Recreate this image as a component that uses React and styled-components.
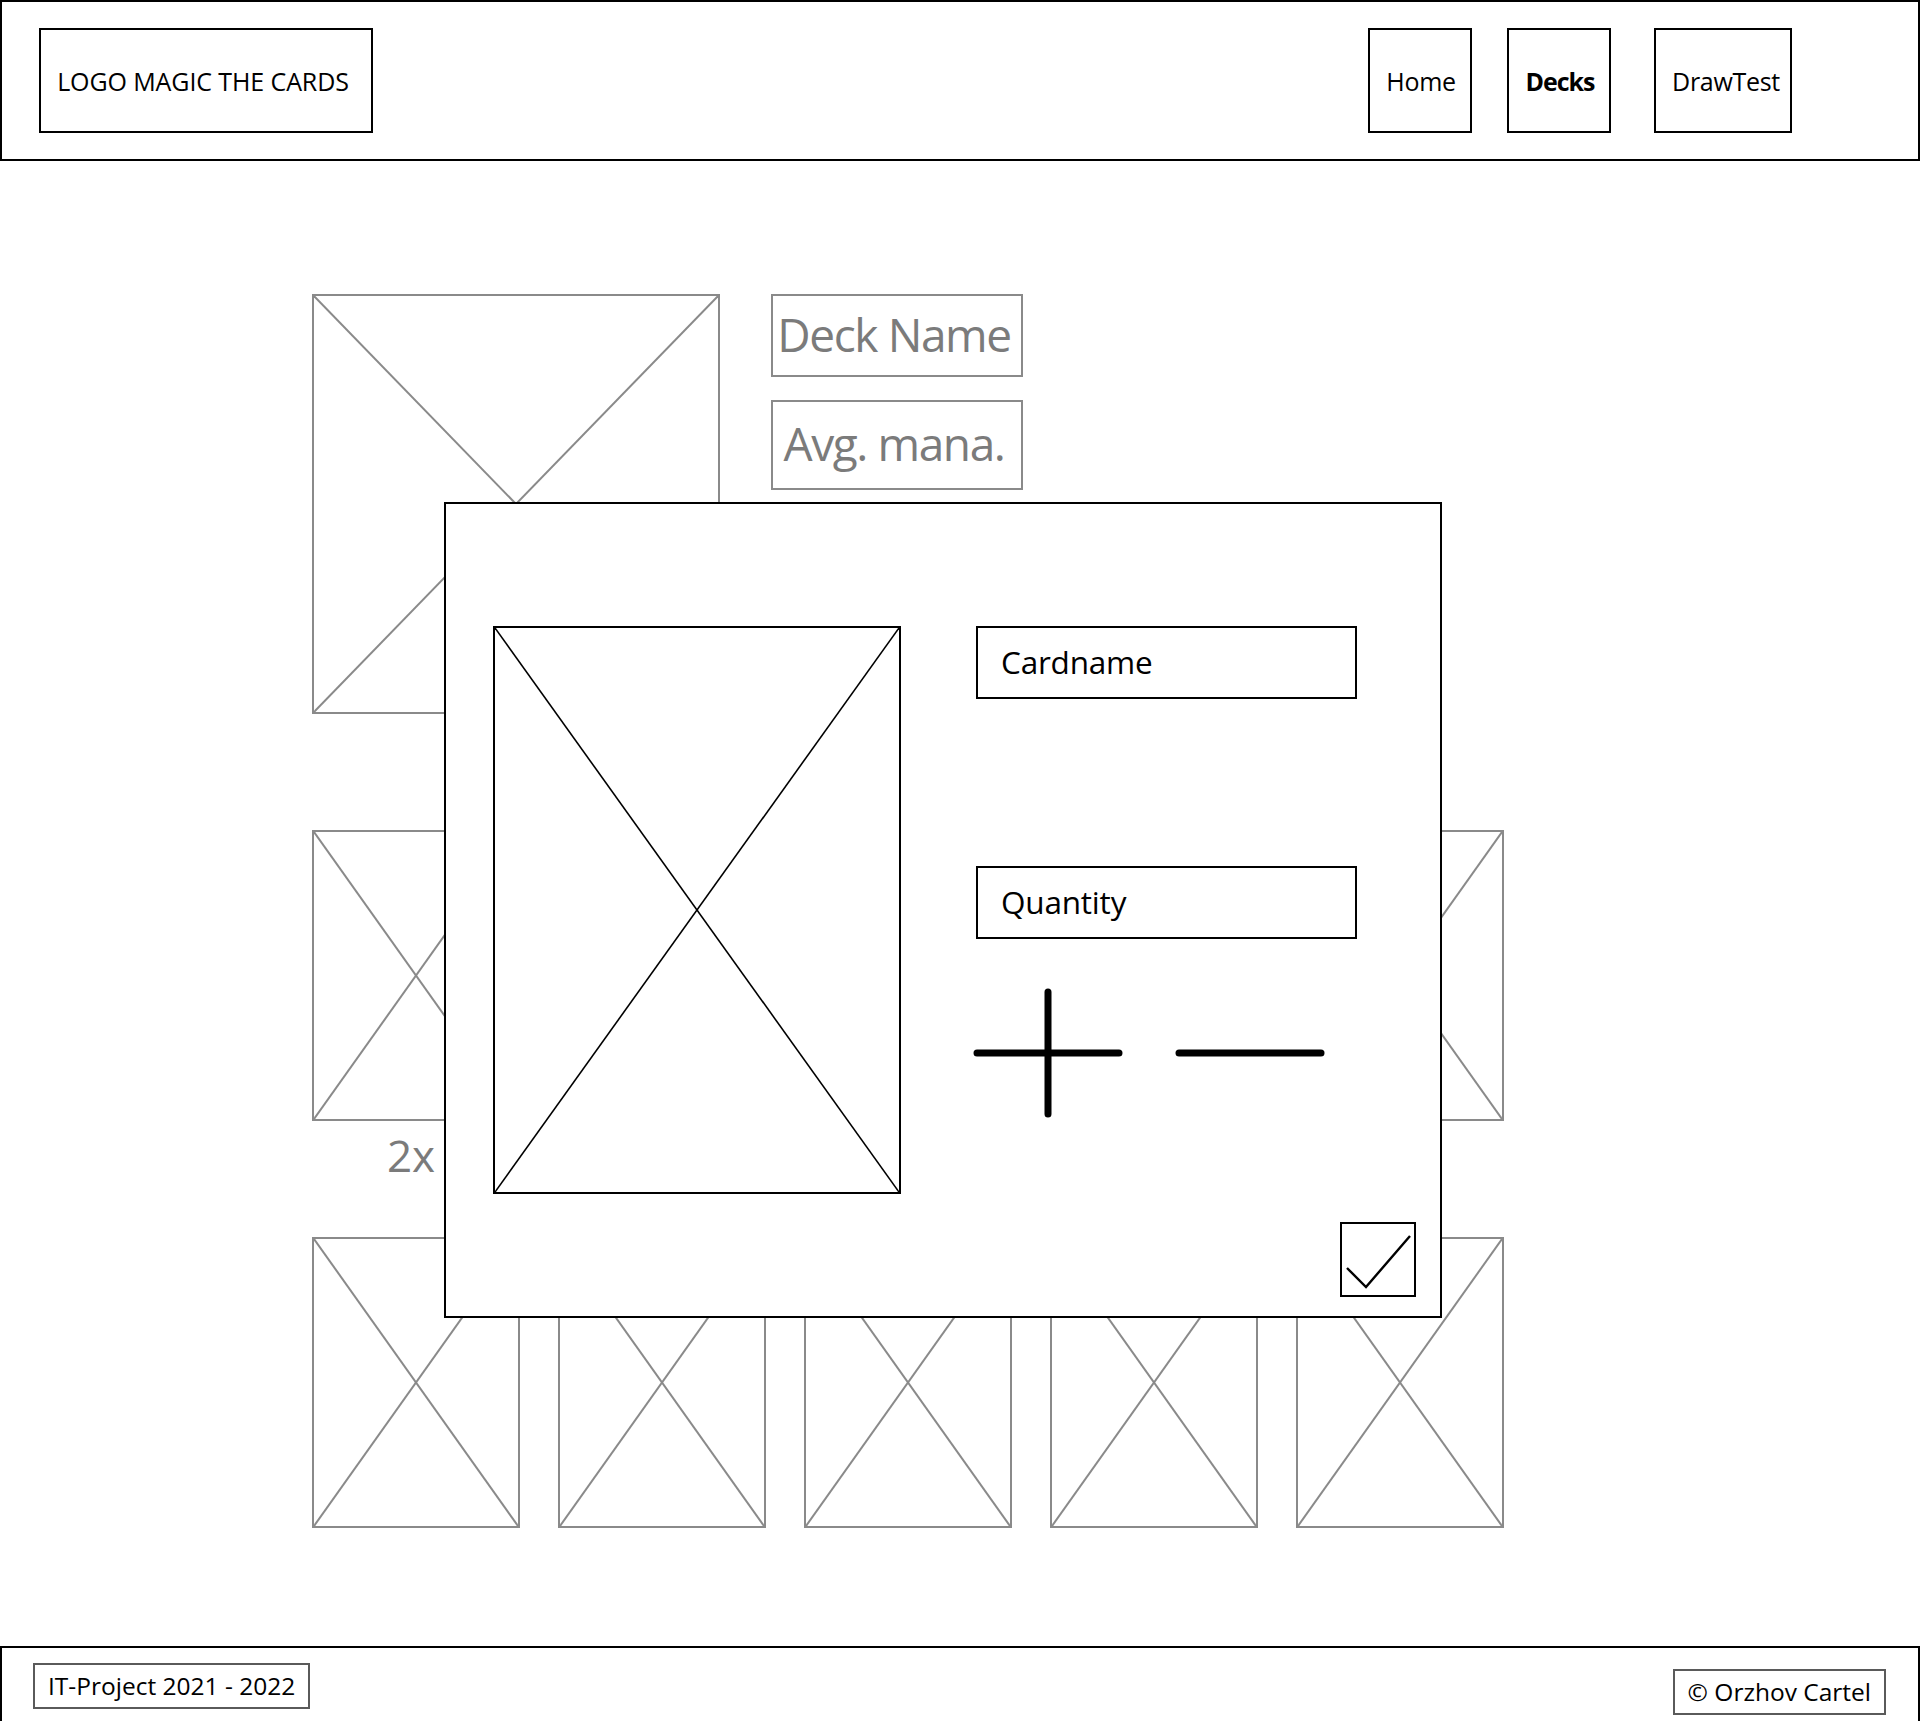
import React from "react"
import styled, { createGlobalStyle } from "styled-components"

const colors = {
  black: "#000000",
  line: "#8a8a8a",
  muted: "#7b7b7b",
  boxLine: "#5a5a5a",
  white: "#ffffff",
}

const GlobalStyle = createGlobalStyle`
  * {
    box-sizing: border-box;
  }

  body {
    margin: 0;
    background: ${colors.white};
    font-family: "Open Sans", "Noto Sans", sans-serif;
    color: ${colors.black};
  }
`

const Page = styled.div`
  width: 1920px;
  min-height: 1721px;
  display: flex;
  flex-direction: column;
`

/* header */

const Header = styled.header`
  height: 161px;
  border: 2px solid ${colors.black};
  display: flex;
  align-items: center;
  justify-content: space-between;
  padding: 0 126px 0 37px;
`

const Logo = styled.div`
  width: 334px;
  height: 105px;
  border: 2px solid ${colors.black};
  display: flex;
  align-items: center;
  justify-content: center;
  padding-right: 6px;
  font-size: 25px;
  letter-spacing: -0.1px;
`

const Nav = styled.nav`
  display: flex;
  align-items: center;
  gap: 35px;
`

const NavItem = styled.a`
  width: ${(p) => p.$width}px;
  height: 105px;
  margin-left: ${(p) => p.$offset || 0}px;
  border: 2px solid ${colors.black};
  display: flex;
  align-items: center;
  justify-content: center;
  padding-left: ${(p) => p.$shift || 0}px;
  font-size: 25px;
  font-weight: ${(p) => (p.$active ? 700 : 400)};
  letter-spacing: ${(p) => (p.$active ? "-1px" : "-0.3px")};
  color: ${colors.black};
  text-decoration: none;
`

/* main area */

const Main = styled.main`
  position: relative;
  flex: 1;
  padding: 133px 0 118px 312px;
`

const TopRow = styled.div`
  display: flex;
  gap: 51px;
`

const DeckInfo = styled.div`
  display: flex;
  flex-direction: column;
  gap: 23px;
`

const InfoBox = styled.div`
  width: 252px;
  height: ${(p) => p.$height}px;
  border: 2px solid ${colors.line};
  display: flex;
  align-items: center;
  justify-content: center;
  padding: 0 6px 4px 0;
  font-size: 46px;
  letter-spacing: -1.4px;
  color: ${colors.muted};
  white-space: nowrap;
`

const CardGrid = styled.div`
  display: grid;
  grid-template-columns: repeat(5, 208px);
  column-gap: 38px;
  margin-top: ${(p) => p.$top}px;
`

const CardCell = styled.div`
  display: flex;
  flex-direction: column;
`

const CountLabel = styled.div`
  margin-top: 12px;
  padding-right: 10px;
  height: 44px;
  font-size: 44px;
  line-height: 1;
  text-align: center;
  color: ${colors.muted};
`

const PlaceholderBox = styled.div`
  width: ${(p) => p.$w}px;
  height: ${(p) => p.$h}px;
  border: 2px solid ${(p) => p.$color};
  background: ${colors.white};
  flex-shrink: 0;

  svg {
    display: block;
    width: 100%;
    height: 100%;
  }
`

const Placeholder = ({ w, h, color = colors.line, stroke = 2 }) => (
  <PlaceholderBox $w={w} $h={h} $color={color}>
    <svg>
      <line x1="0" y1="0" x2="100%" y2="100%" stroke={color} strokeWidth={stroke} />
      <line x1="100%" y1="0" x2="0" y2="100%" stroke={color} strokeWidth={stroke} />
    </svg>
  </PlaceholderBox>
)

/* modal */

const Modal = styled.div`
  position: absolute;
  top: 341px;
  left: 444px;
  width: 998px;
  border: 2px solid ${colors.black};
  background: ${colors.white};
  padding: 122px 24px 19px 47px;
  display: flex;
  flex-direction: column;
`

const ModalBody = styled.div`
  display: flex;
  gap: 75px;
`

const ModalFields = styled.div`
  display: flex;
  flex-direction: column;
`

const Field = styled.div`
  width: 381px;
  height: 73px;
  margin-top: ${(p) => p.$top || 0}px;
  border: 2px solid ${colors.black};
  display: flex;
  align-items: center;
  padding: 0 0 2px 23px;
  font-size: 31.5px;
  letter-spacing: -0.2px;
`

const Stepper = styled.div`
  display: flex;
  align-items: center;
  gap: 52px;
  margin: 49px 0 0 -3px;
`

const ModalFooter = styled.div`
  display: flex;
  justify-content: flex-end;
  margin-top: 28px;
`

const Confirm = styled.button`
  width: 76px;
  height: 75px;
  padding: 0;
  border: 2px solid ${colors.black};
  background: ${colors.white};

  svg {
    display: block;
  }
`

/* footer */

const Footer = styled.footer`
  height: 100px;
  border: 2px solid ${colors.black};
  display: flex;
  align-items: flex-start;
  justify-content: space-between;
  padding: 15px 32px 0 31px;
`

const FooterTag = styled.div`
  height: 46px;
  margin-top: ${(p) => p.$top || 0}px;
  padding: 0 ${(p) => p.$pad || 12}px;
  border: 2px solid ${colors.boxLine};
  font-size: 24.5px;
  line-height: 42px;
  white-space: nowrap;
`

const row = [0, 1, 2, 3, 4]

const App = () => {
  return (
    <>
      <GlobalStyle />
      <Page>
        <Header>
          <Logo>LOGO MAGIC THE CARDS</Logo>
          <Nav>
            <NavItem $width={104} $shift={2}>
              Home
            </NavItem>
            <NavItem $width={104} $shift={2} $active>
              Decks
            </NavItem>
            <NavItem $width={138} $offset={8} $shift={6}>
              DrawTest
            </NavItem>
          </Nav>
        </Header>

        <Main>
          <TopRow>
            <Placeholder w={408} h={420} />
            <DeckInfo>
              <InfoBox $height={83}>Deck Name</InfoBox>
              <InfoBox $height={90}>Avg. mana.</InfoBox>
            </DeckInfo>
          </TopRow>

          <CardGrid $top={116}>
            {row.map((i) => (
              <CardCell key={i}>
                <Placeholder w={208} h={291} />
                <CountLabel>2x</CountLabel>
              </CardCell>
            ))}
          </CardGrid>

          <CardGrid $top={60}>
            {row.map((i) => (
              <CardCell key={i}>
                <Placeholder w={208} h={291} />
              </CardCell>
            ))}
          </CardGrid>

          <Modal>
            <ModalBody>
              <Placeholder w={408} h={568} color={colors.black} stroke={1.6} />
              <ModalFields>
                <Field>Cardname</Field>
                <Field $top={167}>Quantity</Field>
                <Stepper>
                  <svg width="150" height="130" viewBox="0 0 150 130">
                    <path
                      d="M4 65H146M75 4V126"
                      stroke={colors.black}
                      strokeWidth="7"
                      strokeLinecap="round"
                      fill="none"
                    />
                  </svg>
                  <svg width="150" height="12" viewBox="0 0 150 12">
                    <path
                      d="M4 6H146"
                      stroke={colors.black}
                      strokeWidth="7"
                      strokeLinecap="round"
                      fill="none"
                    />
                  </svg>
                </Stepper>
              </ModalFields>
            </ModalBody>
            <ModalFooter>
              <Confirm aria-label="confirm">
                <svg width="72" height="71" viewBox="0 0 72 71">
                  <path
                    d="M5 44L24 63L68 12"
                    stroke={colors.black}
                    strokeWidth="2.4"
                    fill="none"
                  />
                </svg>
              </Confirm>
            </ModalFooter>
          </Modal>
        </Main>

        <Footer>
          <FooterTag $pad={13}>IT-Project 2021 - 2022</FooterTag>
          <FooterTag $top={6} $pad={13}>
            © Orzhov Cartel
          </FooterTag>
        </Footer>
      </Page>
    </>
  )
}

export default App
